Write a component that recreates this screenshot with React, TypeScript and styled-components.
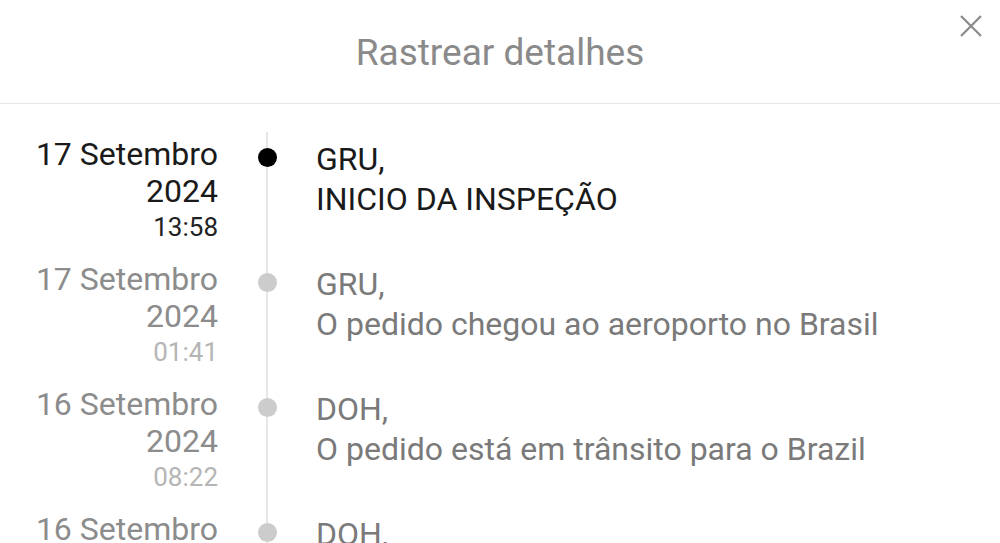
import React from "react";
import styled, { createGlobalStyle } from "styled-components";

const Global = createGlobalStyle`
  html, body {
    margin: 0;
    padding: 0;
    background: #ffffff;
    overflow: hidden;
  }
  body {
    font-family: Roboto, "Noto Sans", "Liberation Sans", sans-serif;
    -webkit-font-smoothing: antialiased;
  }
`;

const Page = styled.div`
  width: 1000px;
  height: 543px;
  overflow: hidden;
  background: #fff;
`;

const Header = styled.header`
  display: grid;
  grid-template-columns: 1fr auto 1fr;
  height: 103px;
  border-bottom: 1px solid #e6e6e6;
`;

const Title = styled.h1`
  grid-column: 2;
  margin: 0;
  padding-top: 2px;
  font-size: 37px;
  font-weight: 400;
  line-height: 101px;
  color: #8a8a8a;
  letter-spacing: 0;
`;

const CloseButton = styled.button`
  grid-column: 3;
  justify-self: end;
  align-self: start;
  margin: 14px 17px 0 0;
  width: 24px;
  height: 24px;
  padding: 0;
  border: 0;
  background: none;
  display: flex;
  align-items: center;
  justify-content: center;
  cursor: pointer;
`;

const List = styled.ol`
  list-style: none;
  margin: 0;
  padding: 28px 0 0;
`;

const Row = styled.li`
  display: grid;
  grid-template-columns: 218px 98px 1fr;
  height: 125px;
`;

const DateCol = styled.div<{ $active: boolean }>`
  padding-top: 4px;
  text-align: right;
  font-size: 32px;
  line-height: 37px;
  color: ${(p) => (p.$active ? "#1a1a1a" : "#8c8c8c")};
`;

const Time = styled.div<{ $active: boolean }>`
  font-size: 26px;
  line-height: 34px;
  color: ${(p) => (p.$active ? "#222" : "#b5b5b5")};
`;

const Rail = styled.div`
  display: flex;
  justify-content: center;
  background: linear-gradient(#e6e6e6, #e6e6e6) center / 2px 100% no-repeat;
`;

const Dot = styled.span<{ $active: boolean }>`
  margin-top: 16px;
  width: 19px;
  height: 19px;
  border-radius: 50%;
  background: ${(p) => (p.$active ? "#000" : "#cccccc")};
`;

const Body = styled.div<{ $active: boolean }>`
  padding-top: 7px;
  font-size: 32px;
  line-height: 40px;
  color: ${(p) => (p.$active ? "#1a1a1a" : "#7a7a7a")};
  white-space: nowrap;
`;

type Event = {
  day: string;
  year: string;
  time: string;
  place: string;
  desc: string;
};

const events: Event[] = [
  { day: "17 Setembro", year: "2024", time: "13:58", place: "GRU,", desc: "INICIO DA INSPEÇÃO" },
  { day: "17 Setembro", year: "2024", time: "01:41", place: "GRU,", desc: "O pedido chegou ao aeroporto no Brasil" },
  { day: "16 Setembro", year: "2024", time: "08:22", place: "DOH,", desc: "O pedido está em trânsito para o Brazil" },
  { day: "16 Setembro", year: "2024", time: "02:10", place: "DOH,", desc: "O pedido chegou ao aeroporto de trânsito" },
];

export default function App() {
  return (
    <Page>
      <Global />
      <Header>
        <Title>Rastrear detalhes</Title>
        <CloseButton aria-label="Fechar">
          <svg width="22" height="22" viewBox="0 0 22 22" fill="none">
            <path d="M1 1L21 21M21 1L1 21" stroke="#8a8a8a" strokeWidth="2.2" strokeLinecap="butt" />
          </svg>
        </CloseButton>
      </Header>
      <List>
        {events.map((e, i) => {
          const active = i === 0;
          return (
            <Row key={i}>
              <DateCol $active={active}>
                <div>{e.day}</div>
                <div>{e.year}</div>
                <Time $active={active}>{e.time}</Time>
              </DateCol>
              <Rail>
                <Dot $active={active} />
              </Rail>
              <Body $active={active}>
                <div>{e.place}</div>
                <div>{e.desc}</div>
              </Body>
            </Row>
          );
        })}
      </List>
    </Page>
  );
}
